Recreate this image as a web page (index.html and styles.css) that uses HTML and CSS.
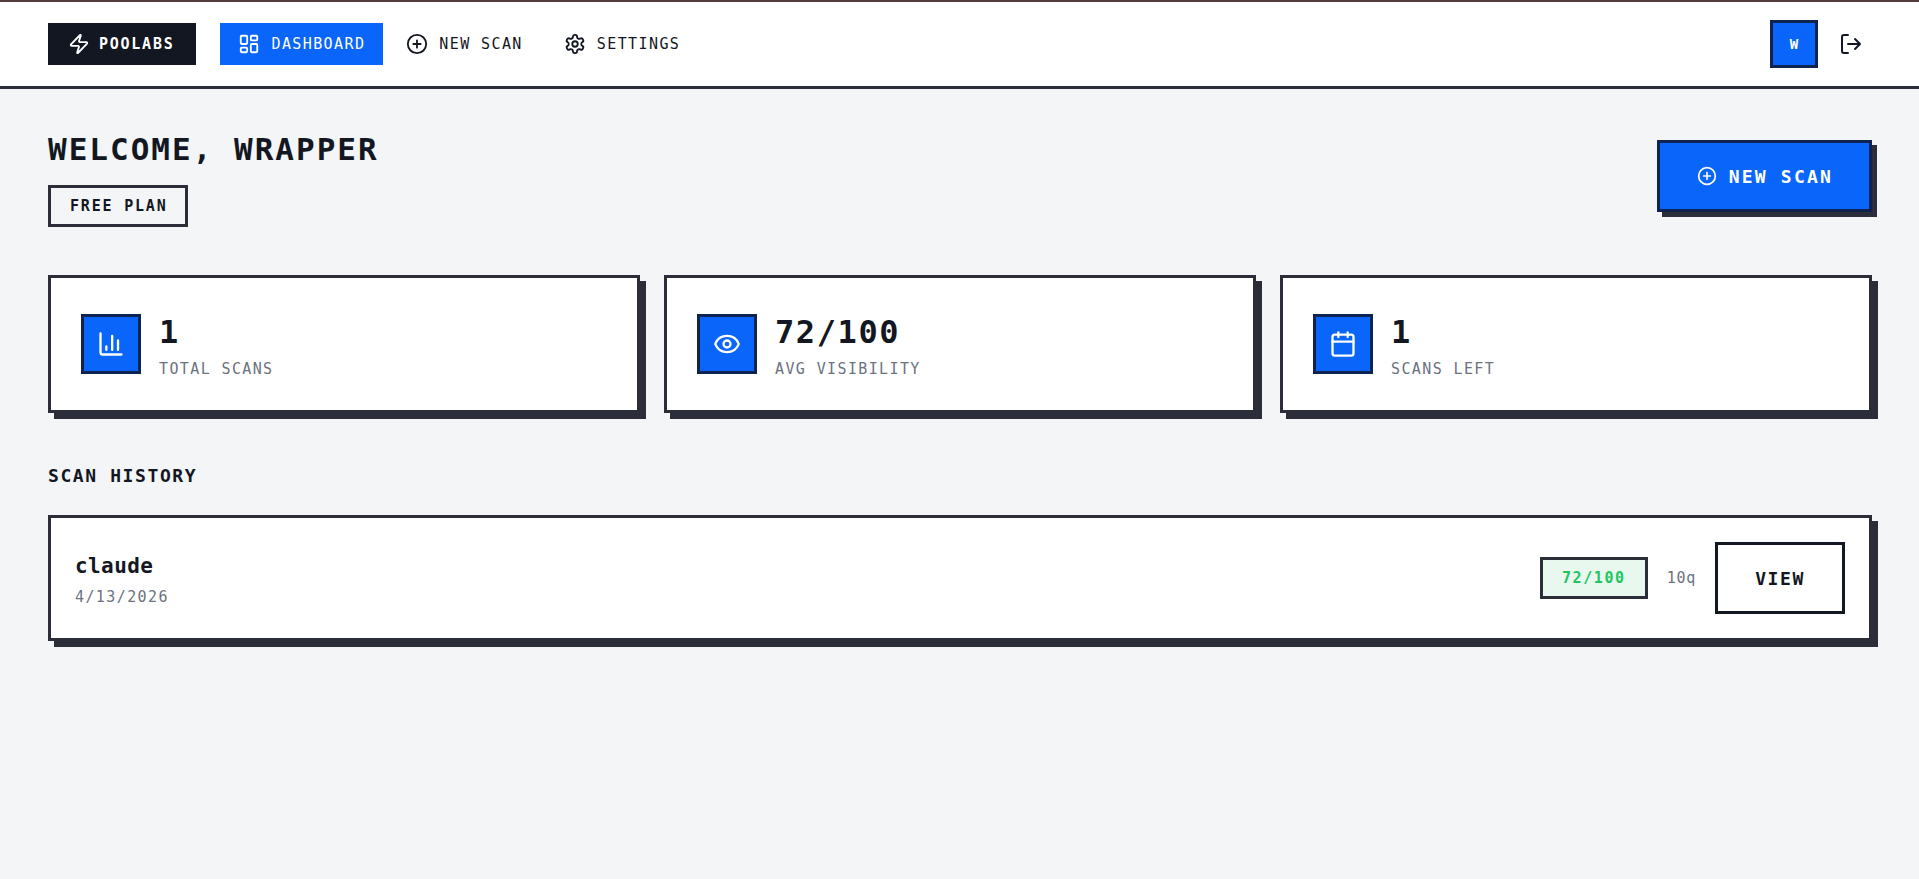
FILE: index.html
```html
<!DOCTYPE html>
<html lang="en">
<head>
<meta charset="utf-8">
<title>Poolabs Dashboard</title>
<link rel="stylesheet" href="styles.css">
</head>
<body>
<header class="topbar">
  <nav class="nav">
    <a class="logo"><svg class="ic" viewBox="0 0 24 24"><path d="M4 14a1 1 0 0 1-.78-1.63l9.9-10.2a.5.5 0 0 1 .86.46l-1.92 6.02A1 1 0 0 0 13 10h7a1 1 0 0 1 .78 1.63l-9.9 10.2a.5.5 0 0 1-.86-.46l1.92-6.02A1 1 0 0 0 11 14z"/></svg>POOLABS</a>
    <a class="link active"><svg class="ic" viewBox="0 0 24 24"><rect x="3" y="3" width="7" height="9" rx="1"/><rect x="14" y="3" width="7" height="5" rx="1"/><rect x="14" y="12" width="7" height="9" rx="1"/><rect x="3" y="16" width="7" height="5" rx="1"/></svg>DASHBOARD</a>
    <a class="link"><svg class="ic" viewBox="0 0 24 24"><circle cx="12" cy="12" r="10"/><path d="M8 12h8M12 8v8"/></svg>NEW SCAN</a>
    <a class="link"><svg class="ic" viewBox="0 0 24 24"><path d="M12.22 2h-.44a2 2 0 0 0-2 2v.18a2 2 0 0 1-1 1.73l-.43.25a2 2 0 0 1-2 0l-.15-.08a2 2 0 0 0-2.73.73l-.22.38a2 2 0 0 0 .73 2.73l.15.1a2 2 0 0 1 1 1.72v.51a2 2 0 0 1-1 1.74l-.15.09a2 2 0 0 0-.73 2.73l.22.38a2 2 0 0 0 2.73.73l.15-.08a2 2 0 0 1 2 0l.43.25a2 2 0 0 1 1 1.73V20a2 2 0 0 0 2 2h.44a2 2 0 0 0 2-2v-.18a2 2 0 0 1 1-1.73l.43-.25a2 2 0 0 1 2 0l.15.08a2 2 0 0 0 2.73-.73l.22-.39a2 2 0 0 0-.73-2.73l-.15-.08a2 2 0 0 1-1-1.74v-.5a2 2 0 0 1 1-1.74l.15-.09a2 2 0 0 0 .73-2.73l-.22-.38a2 2 0 0 0-2.73-.73l-.15.08a2 2 0 0 1-2 0l-.43-.25a2 2 0 0 1-1-1.73V4a2 2 0 0 0-2-2z"/><circle cx="12" cy="12" r="3"/></svg>SETTINGS</a>
  </nav>
  <div class="user">
    <div class="avatar">W</div>
    <svg class="logout" viewBox="0 0 24 24"><path d="M9 21H5a2 2 0 0 1-2-2V5a2 2 0 0 1 2-2h4M16 17l5-5-5-5M21 12H9"/></svg>
  </div>
</header>
<main class="main">
  <section class="head">
    <div class="welcome">
      <h1>WELCOME, WRAPPER</h1>
      <span class="plan">FREE PLAN</span>
    </div>
    <a class="cta"><svg class="ic" viewBox="0 0 24 24"><circle cx="12" cy="12" r="10"/><path d="M8 12h8M12 8v8"/></svg>NEW SCAN</a>
  </section>
  <section class="stats">
    <div class="card">
      <div class="tile"><svg viewBox="0 0 24 24"><path d="M3 3v16a2 2 0 0 0 2 2h16M18 17V9M13 17V5M8 17v-3"/></svg></div>
      <div class="stat"><div class="value">1</div><div class="label">TOTAL SCANS</div></div>
    </div>
    <div class="card">
      <div class="tile"><svg viewBox="0 0 24 24"><path d="M2.06 12.35a1 1 0 0 1 0-.7 10.75 10.75 0 0 1 19.88 0 1 1 0 0 1 0 .7 10.75 10.75 0 0 1-19.88 0"/><circle cx="12" cy="12" r="3"/></svg></div>
      <div class="stat"><div class="value">72/100</div><div class="label">AVG VISIBILITY</div></div>
    </div>
    <div class="card">
      <div class="tile"><svg viewBox="0 0 24 24"><path d="M8 2v4M16 2v4"/><rect x="3" y="4" width="18" height="18" rx="2"/><path d="M3 10h18"/></svg></div>
      <div class="stat"><div class="value">1</div><div class="label">SCANS LEFT</div></div>
    </div>
  </section>
  <h2 class="title">SCAN HISTORY</h2>
  <section class="row">
    <div class="stat">
      <div class="name">claude</div>
      <div class="date">4/13/2026</div>
    </div>
    <div class="meta">
      <span class="score">72/100</span>
      <span class="count">10q</span>
      <a class="view">VIEW</a>
    </div>
  </section>
</main>
</body>
</html>
```
FILE: styles.css
```css
* { box-sizing: border-box; }
html, body { margin: 0; }
body {
  min-height: 879px;
  background: #f3f5f7;
  color: #131722;
  font-family: "DejaVu Sans Mono", monospace;
}
.topbar {
  height: 89px;
  padding: 0 47px 0 48px;
  display: flex;
  align-items: center;
  justify-content: space-between;
  background: #fff;
  border-top: 2px solid #553c3c;
  border-bottom: 3px solid #2b2e39;
}
.nav { display: flex; align-items: center; gap: 5px; }
.ic { width: 22px; height: 22px; fill: none; stroke: currentColor; stroke-width: 2; stroke-linecap: round; stroke-linejoin: round; flex: none; }
.logo, .link {
  height: 42px;
  display: flex;
  align-items: center;
  font-size: 15px;
  letter-spacing: 1.4px;
}
.logo { gap: 9px; padding: 0 22px 0 20px; background: #131722; color: #fff; font-weight: 700; letter-spacing: 1.75px; margin-right: 19px; }
.link { gap: 11px; padding: 0 18px; }
.link.active { background: #0a66fa; color: #fff; }
.user { display: flex; align-items: center; gap: 21px; }
.avatar {
  width: 48px; height: 48px;
  display: flex; align-items: center; justify-content: center;
  background: #0a66fa; color: #fff;
  border: 3px solid #0f2350;
  font-size: 14px; font-weight: 700;
}
.logout { width: 24px; height: 24px; fill: none; stroke: #131722; stroke-width: 2; stroke-linecap: round; stroke-linejoin: round; margin-right: 9px; }
.main { padding: 40px 47px 40px 48px; }
.head { display: flex; justify-content: space-between; align-items: flex-start; margin-bottom: 48px; }
.welcome { display: flex; flex-direction: column; align-items: flex-start; }
h1 { margin: 0 0 16px; font-size: 31px; line-height: 40px; font-weight: 700; letter-spacing: 2px; }
.plan {
  height: 42px; line-height: 37px;
  padding: 0 18px 0 19px;
  border: 3px solid #2b2e39;
  font-size: 15px; font-weight: 700; letter-spacing: 1.8px;
}
.cta {
  height: 72px;
  margin-top: 11px;
  display: flex; align-items: center; gap: 12px;
  padding: 0 36px 0 37px;
  background: #0a66fa; color: #fff;
  border: 3px solid #0f2350;
  box-shadow: 5px 5px 0 #2b2e39;
  font-size: 18px; font-weight: 700; letter-spacing: 2.2px;
}
.cta .ic { width: 20px; height: 20px; }
.stats { display: grid; grid-template-columns: repeat(3, 1fr); gap: 24px; margin-bottom: 48px; }
.card {
  height: 138px;
  display: flex; align-items: center; gap: 18px;
  padding: 0 30px;
  background: #fff;
  border: 3px solid #2b2e39;
  box-shadow: 6px 6px 0 #2b2e39;
}
.tile {
  width: 60px; height: 60px;
  display: flex; align-items: center; justify-content: center;
  background: #0a66fa;
  border: 3px solid #0f2350;
}
.tile svg { width: 28px; height: 28px; fill: none; stroke: #fff; stroke-width: 2; stroke-linecap: round; stroke-linejoin: round; }
.stat { padding-top: 3px; }
.value { font-size: 32px; line-height: 40px; font-weight: 700; letter-spacing: 1.6px; }
.label { margin-top: 7px; font-size: 15px; line-height: 20px; letter-spacing: 1.38px; color: #6b7280; }
.title { margin: 0 0 24px; font-size: 18px; line-height: 30px; font-weight: 700; letter-spacing: 1.6px; }
.row {
  height: 126px;
  display: flex; align-items: center; justify-content: space-between;
  padding: 0 24px;
  background: #fff;
  border: 3px solid #2b2e39;
  box-shadow: 6px 6px 0 #2b2e39;
}
.name { font-size: 21px; line-height: 28px; font-weight: 700; letter-spacing: .4px; }
.date { margin-top: 6px; font-size: 15px; line-height: 22px; letter-spacing: 1.4px; color: #6b7280; }
.meta { display: flex; align-items: center; gap: 19px; }
.score {
  width: 108px; height: 42px;
  display: flex; align-items: center; justify-content: center;
  background: #e8f8ee; color: #22c55e;
  border: 3px solid #2b2e39;
  font-size: 15px; font-weight: 700; letter-spacing: 1.6px;
}
.count { font-size: 15px; letter-spacing: .7px; color: #6b7280; }
.view {
  width: 130px; height: 72px;
  display: flex; align-items: center; justify-content: center;
  background: #fff;
  border: 3px solid #131722;
  font-size: 18px; font-weight: 700; letter-spacing: 1.6px;
}
```
